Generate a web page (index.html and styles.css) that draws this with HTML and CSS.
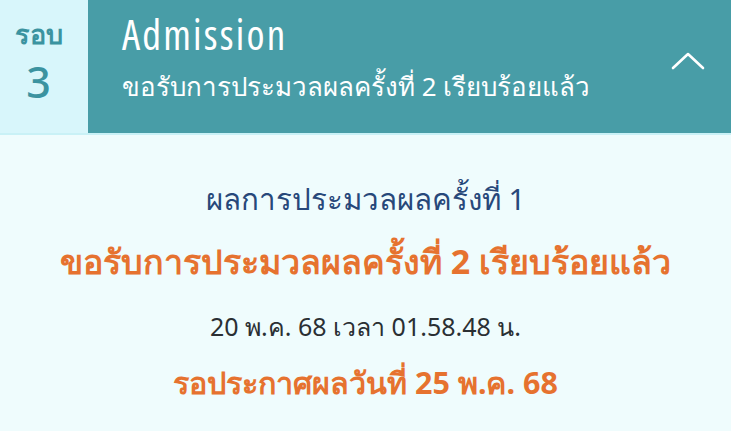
FILE: index.html
```html
<!DOCTYPE html>
<html lang="th">
<head>
<meta charset="utf-8">
<link rel="stylesheet" href="styles.css">
</head>
<body>
<div class="card">
  <div class="head">
    <div class="round">
      <div class="round-label">รอบ</div>
      <div class="round-num">3</div>
    </div>
    <div class="title-bar">
      <div class="titles">
        <div class="title">Admission</div>
        <div class="subtitle">ขอรับการประมวลผลครั้งที่ 2 เรียบร้อยแล้ว</div>
      </div>
      <svg class="chev" width="34" height="20" viewBox="0 0 34 20"><polyline points="2,17 17,3 32,17" fill="none" stroke="#fff" stroke-width="2.6" stroke-linecap="round" stroke-linejoin="round"/></svg>
    </div>
  </div>
  <div class="body">
    <div class="l1">ผลการประมวลผลครั้งที่ 1</div>
    <div class="l2">ขอรับการประมวลผลครั้งที่ 2 เรียบร้อยแล้ว</div>
    <div class="l3">20 พ.ค. 68 เวลา 01.58.48 น.</div>
    <div class="l4">รอประกาศผลวันที่ 25 พ.ค. 68</div>
  </div>
</div>
</body>
</html>
```
FILE: styles.css
```css
html, body { margin: 0; padding: 0; }
body {
  width: 731px; height: 431px; overflow: hidden;
  background: #effcfd;
  font-family: "Noto Sans", "Open Sans", sans-serif;
}
.head {
  display: flex;
  height: 133px;
  border-bottom: 2px solid #c9f1f6;
}
.round {
  width: 88px;
  background: #d8f6fb;
  color: #3b93a0;
  display: flex; flex-direction: column; align-items: center;
  padding: 14px 11px 0 0;
  box-sizing: border-box;
}
.round-label { font-size: 27px; font-weight: 600; line-height: 40px; }
.round-num { font-size: 43px; font-weight: 500; line-height: 56px; }
.title-bar {
  flex: 1;
  background: #489da7;
  display: flex; align-items: flex-start; justify-content: space-between;
  padding: 11px 26px 0 34px;
  color: #fff;
}
.titles { display: flex; flex-direction: column; }
.title {
  font-family: "Open Sans", sans-serif;
  font-size: 41px; line-height: 46px;
  font-stretch: 75%;
  letter-spacing: 2.2px;
}
.subtitle { font-size: 25.9px; line-height: 48px; margin-top: 5px; }
.chev { margin-top: 40px; }
.body {
  display: flex; flex-direction: column; align-items: center;
  padding-top: 34px;
}
.l1 { color: #27487a; font-size: 29.5px; line-height: 60px; }
.l2 { color: #e6722f; font-size: 34px; font-weight: 700; line-height: 64px; }
.l3 { color: #2a2f33; font-size: 25px; line-height: 66px; }
.l4 { color: #e6722f; font-size: 30.5px; font-weight: 700; line-height: 46px; }
```
